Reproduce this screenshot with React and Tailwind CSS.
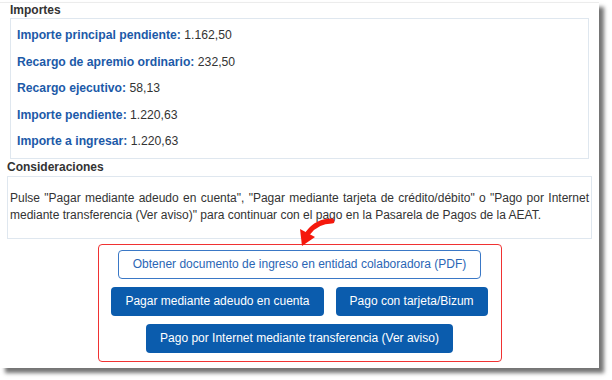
const importes = [
  { label: 'Importe principal pendiente:', value: '1.162,50' },
  { label: 'Recargo de apremio ordinario:', value: '232,50' },
  { label: 'Recargo ejecutivo:', value: '58,13' },
  { label: 'Importe pendiente:', value: '1.220,63' },
  { label: 'Importe a ingresar:', value: '1.220,63' },
]

const SolidButton = ({ children }) => (
  <button className="h-[29px] px-[14px] rounded-[4px] bg-[#0b5cad] text-white text-[12px] leading-none">
    {children}
  </button>
)

const CurvedArrow = () => (
  <svg
    className="absolute left-[294px] top-[214px]"
    width="42"
    height="32"
    viewBox="0 0 42 32"
    fill="none"
  >
    <path d="M38 4 Q23 4 14 16" stroke="#f5180c" strokeWidth="5" strokeLinecap="round" />
    <polygon points="8,29 6,12 21,20" fill="#f5180c" />
  </svg>
)

export default function App() {
  return (
    <div className="w-[612px] h-[380px] bg-white pt-[2px] font-['Liberation_Sans',Arial,sans-serif] text-[#333]">
      <div className="relative w-[599px] h-[366px] bg-white border-t border-[#ececec] shadow-[5px_5px_4px_rgba(0,0,0,0.55)]">
        <h2 className="pl-[10px] text-[12px] font-bold leading-[15px]">Importes</h2>
        <div className="ml-[10px] w-[579px] border border-[#dfe7ef] pt-[3px] pb-[3px] px-[6px]">
          {importes.map((item) => (
            <div key={item.label} className="text-[12.2px] leading-[26.5px]">
              <span className="font-bold text-[#1c5aa8]">{item.label}</span> {item.value}
            </div>
          ))}
        </div>

        <h2 className="pl-[7px] text-[12px] font-bold leading-[17px]">Consideraciones</h2>
        <div className="ml-[7px] w-[585px] h-[63px] border border-[#dfe7ef] pt-[13px] px-[2px] text-[12px] leading-[17px] text-justify">
          Pulse "Pagar mediante adeudo en cuenta", "Pagar mediante tarjeta de crédito/débito" o "Pago por Internet
          mediante transferencia (Ver aviso)" para continuar con el pago en la Pasarela de Pagos de la AEAT.
        </div>

        <div className="mx-auto mt-[5px] w-[404px] h-[118px] border-[1.5px] border-[#f03232] rounded-[4px] flex flex-col items-center pt-[5px] gap-[8px]">
          <button className="h-[29px] px-[14px] rounded-[4px] border border-[#3a78c6] bg-white text-[#2a66b5] text-[12px] leading-none">
            Obtener documento de ingreso en entidad colaboradora (PDF)
          </button>
          <div className="flex gap-[12px]">
            <SolidButton>Pagar mediante adeudo en cuenta</SolidButton>
            <SolidButton>Pago con tarjeta/Bizum</SolidButton>
          </div>
          <SolidButton>Pago por Internet mediante transferencia (Ver aviso)</SolidButton>
        </div>

        <CurvedArrow />
      </div>
    </div>
  )
}
